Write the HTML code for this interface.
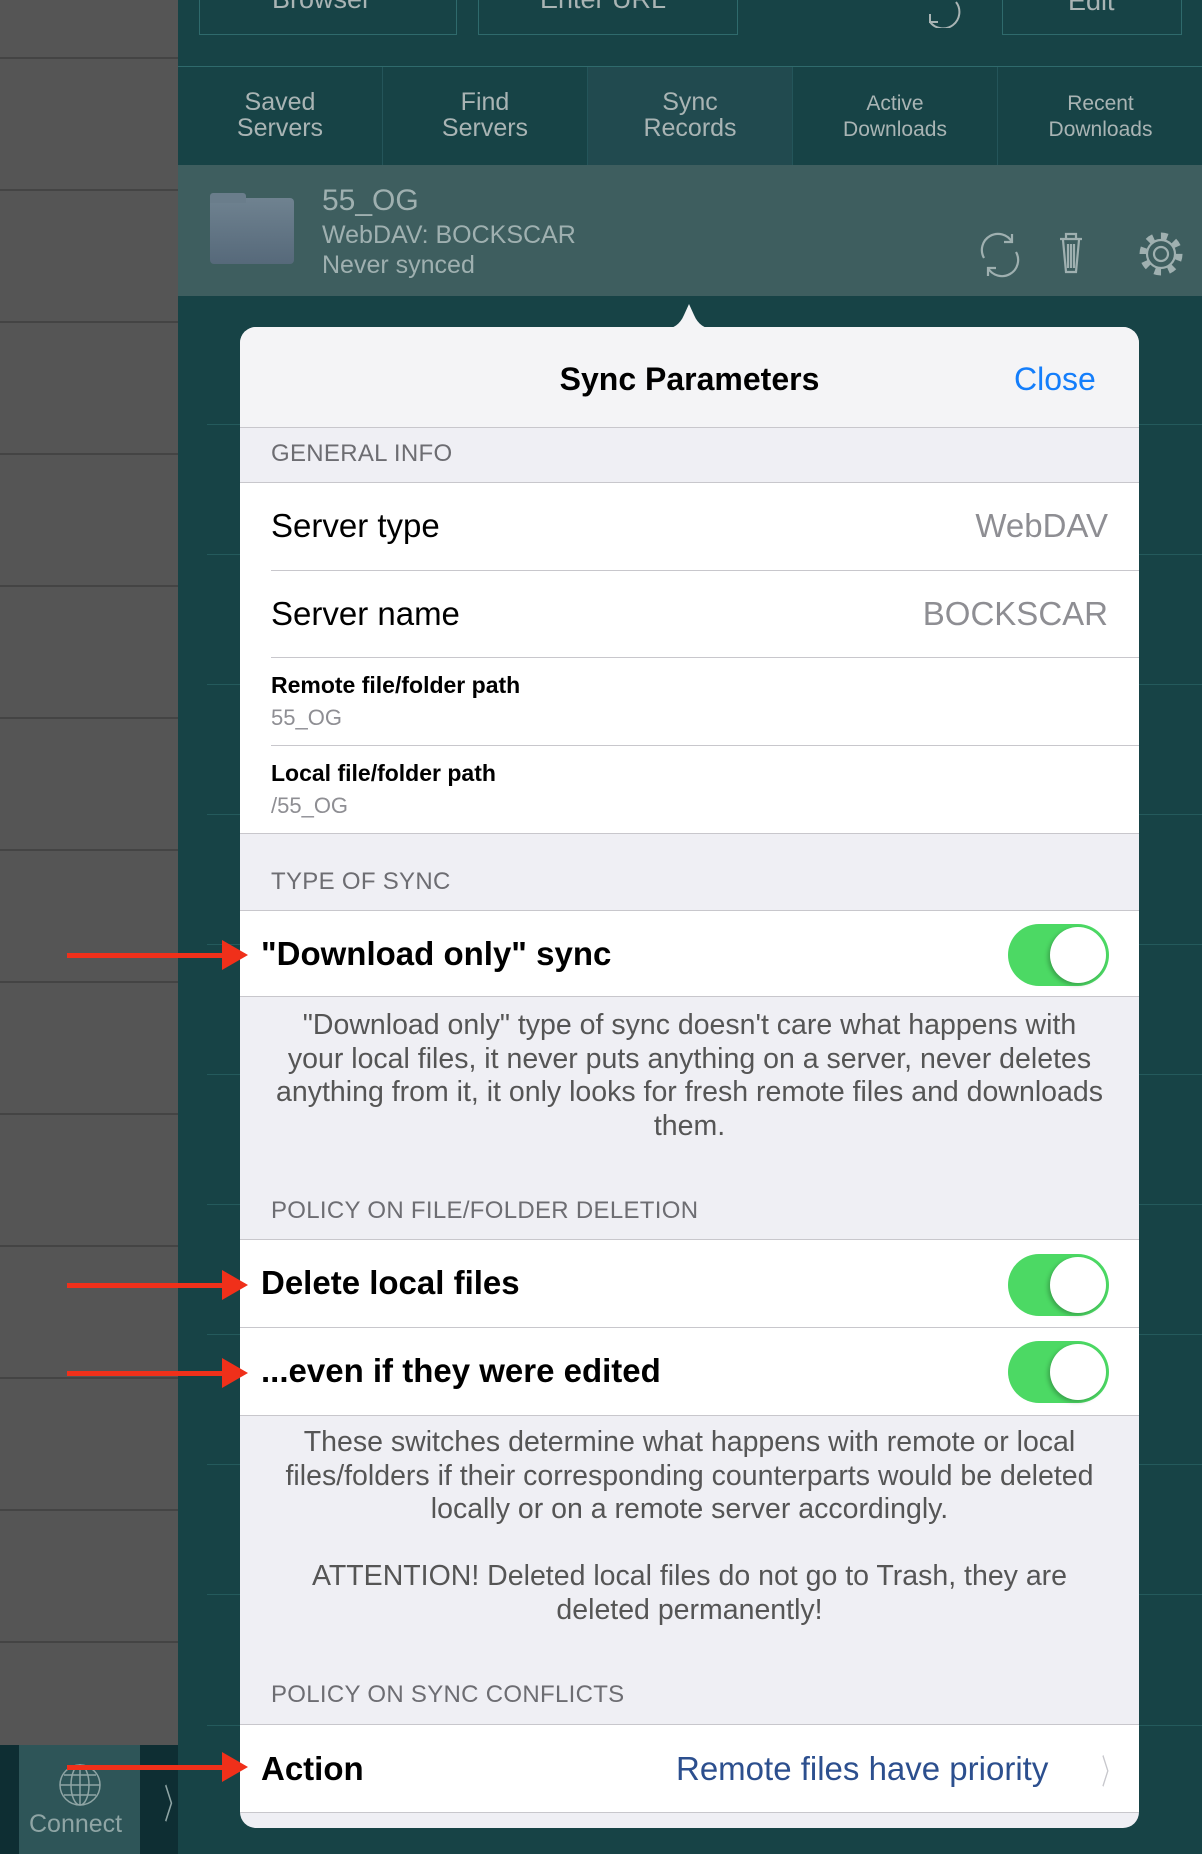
<!DOCTYPE html>
<html><head><meta charset="utf-8"><style>
*{margin:0;padding:0;box-sizing:border-box}
body{width:1202px;height:1854px;position:relative;overflow:hidden;background:#174346;font-family:"Liberation Sans",sans-serif}
.abs{position:absolute}
.side{left:0;top:0;width:178px;height:1745px;background:#555}
.sl{position:absolute;left:0;width:178px;height:2px;background:#444}
.tb{position:absolute;top:-2px;height:37px;border:1.5px solid #2f6a6c;border-top:none}
.tab{position:absolute;top:67px;height:98px;width:205px;color:#a9b4b4;text-align:center;font-size:25px;line-height:26px;border-right:1px solid #24555a;padding-top:22px}
.tab.s{font-size:21px}
.pop{left:240px;top:327px;width:899px;height:1501px;background:#efeff4;border-radius:16px;overflow:hidden}
.sh{position:absolute;left:31px;font-size:24px;color:#6d6d72;letter-spacing:.3px}
.row{position:absolute;left:0;width:899px;background:#fff}
.hl{position:absolute;left:31px;right:0;height:1px;background:#c8c7cc}
.fl{position:absolute;left:0;right:0;height:1px;background:#c8c7cc}
.lab{position:absolute;left:31px;font-size:33px;color:#000}
.val{position:absolute;right:31px;font-size:33px;color:#8e8e93}
.bl{position:absolute;left:21px;font-size:33px;font-weight:bold;color:#000}
.tog{position:absolute;left:768px;width:101px;height:62px;border-radius:31px;background:#4cd964}
.tog:after{content:"";position:absolute;right:3px;top:3px;width:56px;height:56px;border-radius:50%;background:#fff;box-shadow:-2px 2px 4px rgba(0,0,0,.25)}
.desc{position:absolute;left:0;right:0;text-align:center;font-size:28.5px;line-height:33.5px;color:#555;white-space:nowrap}
.arr{position:absolute;height:5px;background:#f0301a}
.arr:after{content:"";position:absolute;right:-24px;top:-13px;border-left:26px solid #f0301a;border-top:15px solid transparent;border-bottom:15px solid transparent}
.dl{position:absolute;left:207px;right:0;height:1px;background:#245a5c}
</style></head><body>
<div class="abs side">
<div class="sl" style="top:57px"></div><div class="sl" style="top:189px"></div><div class="sl" style="top:321px"></div><div class="sl" style="top:453px"></div><div class="sl" style="top:585px"></div><div class="sl" style="top:717px"></div><div class="sl" style="top:849px"></div><div class="sl" style="top:981px"></div><div class="sl" style="top:1113px"></div><div class="sl" style="top:1245px"></div><div class="sl" style="top:1377px"></div><div class="sl" style="top:1509px"></div><div class="sl" style="top:1641px"></div>
</div>
<div class="abs" style="left:0;top:1745px;width:178px;height:109px;background:#0e2e33"></div>
<div class="abs" style="left:19px;top:1745px;width:121px;height:109px;background:#2e5558"></div>
<svg class="abs" style="left:57px;top:1762px" width="46" height="46" viewBox="0 0 46 46" fill="none" stroke="#8fa5a5" stroke-width="1.5"><circle cx="23" cy="23" r="20"/><ellipse cx="23" cy="23" rx="9" ry="20"/><line x1="23" y1="3" x2="23" y2="43"/><line x1="3" y1="23" x2="43" y2="23"/><line x1="7" y1="13" x2="39" y2="13"/><line x1="7" y1="33" x2="39" y2="33"/></svg>
<div class="abs" style="left:29px;top:1810px;font-size:25px;color:#8fa5a5">Connect</div>
<div class="abs" style="left:154px;top:1772px;color:#8fa5a5;font-size:40px;transform:scaleX(.5)">〉</div>

<div class="tb" style="left:199px;width:258px"></div>
<div class="tb" style="left:478px;width:260px"></div>
<div class="tb" style="left:1002px;width:180px"></div>
<div class="abs" style="left:272px;top:-16px;font-size:27px;color:#a9b4b4">Browser</div>
<div class="abs" style="left:540px;top:-16px;font-size:27px;color:#a9b4b4">Enter URL</div>
<div class="abs" style="left:1068px;top:-14px;font-size:27px;color:#a9b4b4">Edit</div>
<svg class="abs" style="left:918px;top:0" width="50" height="28" viewBox="0 0 50 28" fill="none" stroke="#a9b4b4" stroke-width="2"><path d="M38 2 A16 16 0 0 1 12 22"/><path d="M12 14 L12 22 L20 22"/></svg>
<div class="abs" style="left:178px;top:66px;width:1024px;height:1px;background:#2f6a6c"></div>
<div class="tab" style="left:178px">Saved<br>Servers</div>
<div class="tab" style="left:383px">Find<br>Servers</div>
<div class="tab" style="left:588px;background:#214a4f">Sync<br>Records</div>
<div class="tab s" style="left:793px;padding-top:24px">Active<br>Downloads</div>
<div class="tab s" style="left:998px;padding-top:24px;border:none">Recent<br>Downloads</div>

<div class="abs" style="left:178px;top:165px;width:1024px;height:131px;background:#3e5e5f"></div>
<div class="abs" style="left:210px;top:198px;width:84px;height:66px;border-radius:4px;background:linear-gradient(#6f8290,#56697a)"></div>
<div class="abs" style="left:210px;top:193px;width:36px;height:10px;border-radius:3px 3px 0 0;background:#6a7d8b"></div>
<div class="abs" style="left:322px;top:184px;font-size:30px;color:#9fb0b0">55_OG</div>
<div class="abs" style="left:322px;top:221px;font-size:25px;color:#9fb0b0">WebDAV: BOCKSCAR</div>
<div class="abs" style="left:322px;top:251px;font-size:25px;color:#9fb0b0">Never synced</div>
<svg class="abs" style="left:980px;top:230px" width="120" height="50" viewBox="0 0 120 50" fill="none" stroke="#9fb0b0" stroke-width="2.2"><path d="M4 28 A16 16 0 0 1 32 12"/><path d="M32 4 L32 12 L24 12"/><path d="M36 22 A16 16 0 0 1 8 38"/><path d="M8 46 L8 38 L16 38"/><path d="M86 8 L86 4 L96 4 L96 8 M80 9 L102 9 M83 10 L86 42 L96 42 L99 10 M88 14 L88 38 M91 14 L91 38 M94 14 L94 38"/></svg>
<svg class="abs" style="left:1138px;top:231px" width="46" height="46" viewBox="0 0 46 46" fill="none" stroke="#9fb0b0" stroke-width="2.2"><circle cx="23" cy="23" r="7"/><circle cx="23" cy="23" r="14"/><circle cx="23" cy="23" r="18" stroke-width="7" stroke-dasharray="6.5 7.6"/></svg>

<div class="dl" style="top:424px"></div><div class="dl" style="top:554px"></div><div class="dl" style="top:684px"></div><div class="dl" style="top:814px"></div><div class="dl" style="top:944px"></div><div class="dl" style="top:1074px"></div><div class="dl" style="top:1204px"></div><div class="dl" style="top:1334px"></div><div class="dl" style="top:1464px"></div><div class="dl" style="top:1594px"></div><div class="dl" style="top:1725px"></div>

<svg class="abs" style="left:664px;top:301px" width="50" height="28"><path d="M0 28 Q14 28 20 14 L25 3 L30 14 Q36 28 50 28 Z" fill="#f4f4f6"/></svg>
<div class="abs pop">
<div class="abs" style="left:0;top:0;width:899px;height:101px;background:#f4f4f6"></div>
<div class="fl" style="top:100px"></div>
<div class="abs" style="left:0;width:899px;top:34px;text-align:center;font-size:32px;color:#000;font-weight:bold">Sync Parameters</div>
<div class="abs" style="left:774px;top:34px;font-size:32px;color:#147efb">Close</div>
<div class="sh" style="top:113px">GENERAL INFO</div>
<div class="row" style="top:155px;height:351px"></div>
<div class="fl" style="top:155px"></div>
<div class="lab" style="top:180px">Server type</div><div class="val" style="top:180px">WebDAV</div>
<div class="hl" style="top:243px"></div>
<div class="lab" style="top:268px">Server name</div><div class="val" style="top:268px">BOCKSCAR</div>
<div class="hl" style="top:330px"></div>
<div class="abs" style="left:31px;top:345px;font-size:23px;font-weight:bold">Remote file/folder path</div>
<div class="abs" style="left:31px;top:378px;font-size:22px;color:#8e8e93">55_OG</div>
<div class="hl" style="top:418px"></div>
<div class="abs" style="left:31px;top:433px;font-size:23px;font-weight:bold">Local file/folder path</div>
<div class="abs" style="left:31px;top:466px;font-size:22px;color:#8e8e93">/55_OG</div>
<div class="fl" style="top:506px"></div>
<div class="sh" style="top:541px">TYPE OF SYNC</div>
<div class="fl" style="top:583px"></div>
<div class="row" style="top:584px;height:86px"></div>
<div class="bl" style="top:608px">"Download only" sync</div>
<div class="tog" style="top:597px"></div>
<div class="fl" style="top:669px"></div>
<div class="desc" style="top:682px">"Download only" type of sync doesn't care what happens with<br>your local files, it never puts anything on a server, never deletes<br>anything from it, it only looks for fresh remote files and downloads<br>them.</div>
<div class="sh" style="top:870px">POLICY ON FILE/FOLDER DELETION</div>
<div class="fl" style="top:912px"></div>
<div class="row" style="top:913px;height:175px"></div>
<div class="bl" style="top:937px">Delete local files</div>
<div class="tog" style="top:927px"></div>
<div class="hl" style="top:1000px;left:0"></div>
<div class="bl" style="top:1025px">...even if they were edited</div>
<div class="tog" style="top:1014px"></div>
<div class="fl" style="top:1088px"></div>
<div class="desc" style="top:1099px">These switches determine what happens with remote or local<br>files/folders if their corresponding counterparts would be deleted<br>locally or on a remote server accordingly.</div>
<div class="desc" style="top:1233px">ATTENTION! Deleted local files do not go to Trash, they are<br>deleted permanently!</div>
<div class="sh" style="top:1354px">POLICY ON SYNC CONFLICTS</div>
<div class="fl" style="top:1397px"></div>
<div class="row" style="top:1398px;height:87px"></div>
<div class="bl" style="top:1423px">Action</div>
<div class="abs" style="left:436px;top:1423px;font-size:33px;color:#2c4f8e">Remote files have priority</div>
<div class="abs" style="left:853px;top:1418px;font-size:34px;color:#c7c7cc;transform:scaleX(.5)">〉</div>
<div class="fl" style="top:1485px"></div>
</div>
<div class="arr" style="left:67px;top:953px;width:157px"></div>
<div class="arr" style="left:67px;top:1283px;width:157px"></div>
<div class="arr" style="left:67px;top:1371px;width:157px"></div>
<div class="arr" style="left:67px;top:1765px;width:157px"></div>
</body></html>
